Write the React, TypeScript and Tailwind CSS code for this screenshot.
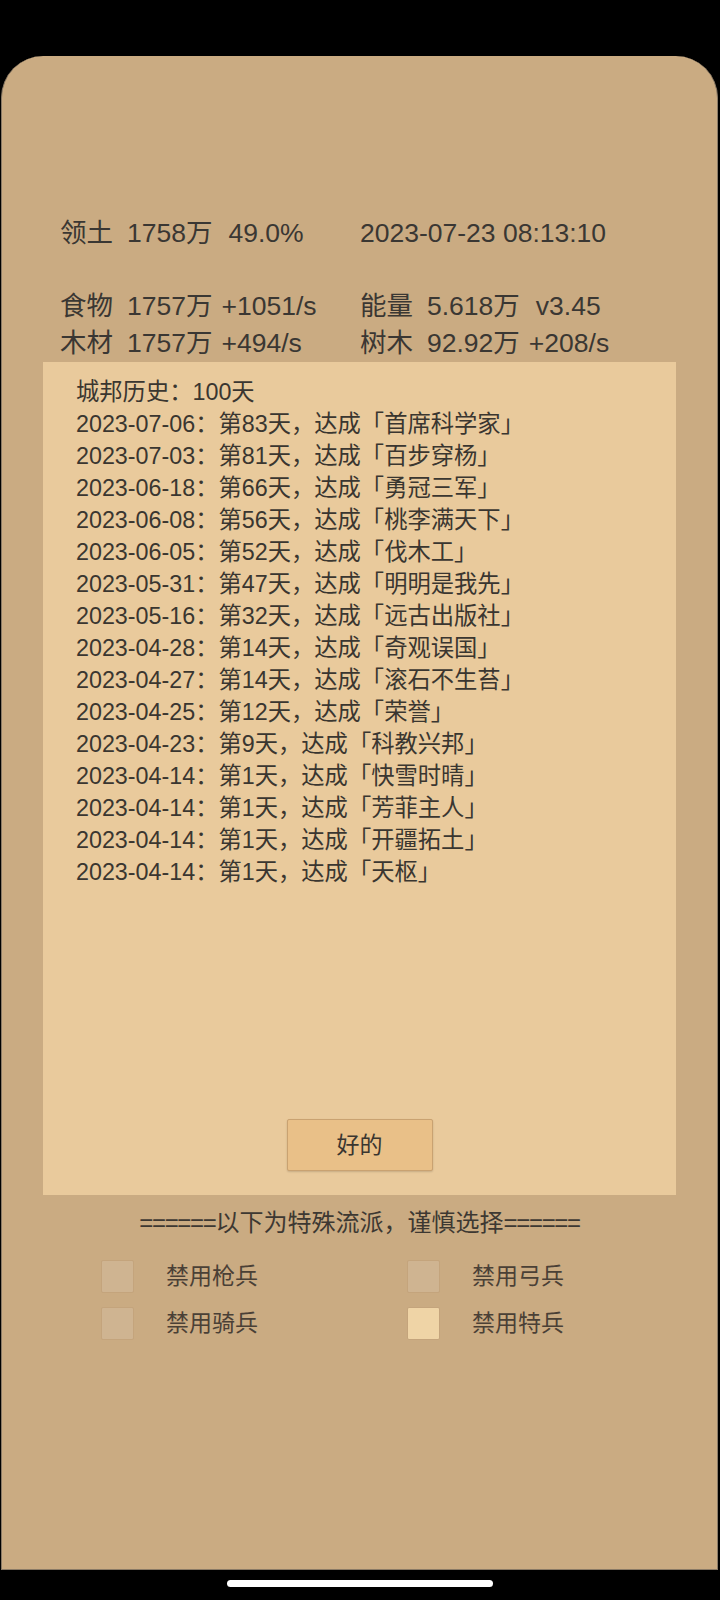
import React from "react";

const font = { fontFamily: "'Liberation Sans', 'Noto Sans CJK SC', sans-serif" };

const history = [
  "2023-07-06：第83天，达成「首席科学家」",
  "2023-07-03：第81天，达成「百步穿杨」",
  "2023-06-18：第66天，达成「勇冠三军」",
  "2023-06-08：第56天，达成「桃李满天下」",
  "2023-06-05：第52天，达成「伐木工」",
  "2023-05-31：第47天，达成「明明是我先」",
  "2023-05-16：第32天，达成「远古出版社」",
  "2023-04-28：第14天，达成「奇观误国」",
  "2023-04-27：第14天，达成「滚石不生苔」",
  "2023-04-25：第12天，达成「荣誉」",
  "2023-04-23：第9天，达成「科教兴邦」",
  "2023-04-14：第1天，达成「快雪时晴」",
  "2023-04-14：第1天，达成「芳菲主人」",
  "2023-04-14：第1天，达成「开疆拓土」",
  "2023-04-14：第1天，达成「天枢」",
];

const options = [
  { label: "禁用枪兵", checked: false },
  { label: "禁用弓兵", checked: false },
  { label: "禁用骑兵", checked: false },
  { label: "禁用特兵", checked: true },
];

const Stat = ({ name, value, extra }: { name: string; value: string; extra?: string }) => (
  <div className="flex whitespace-pre">
    <span>{name}</span>
    <span className="ml-[14px]">{value}</span>
    {extra && <span className={extra.startsWith("+") ? "ml-[9px]" : "ml-[16px]"}>{extra}</span>}
  </div>
);

export default function App() {
  return (
    <div className="w-[720px] h-[1600px] bg-black pt-[56px] overflow-hidden" style={font}>
      <div className="ml-[1px] w-[717px] h-[1514px] bg-[#caab82] rounded-t-[42px] border border-t-0 border-[#8a7a66] flex flex-col">
        {/* Stats */}
        <div className="pt-[159px] pl-[58px] text-[26.5px] leading-[36.5px] text-[#3a3733]">
          <div className="grid grid-cols-[300px_1fr]">
            <Stat name="领土" value="1758万" extra="49.0%" />
            <div className="whitespace-pre">2023-07-23 08:13:10</div>
            <div className="h-[36.5px]" />
            <div className="h-[36.5px]" />
            <Stat name="食物" value="1757万" extra="+1051/s" />
            <Stat name="能量" value="5.618万" extra="v3.45" />
            <Stat name="木材" value="1757万" extra="+494/s" />
            <Stat name="树木" value="92.92万" extra="+208/s" />
          </div>
        </div>

        {/* History panel */}
        <div className="mt-[1px] ml-[41px] w-[633px] h-[833px] bg-[#e9ca9c] flex flex-col pt-[14px] pb-[24px]">
          <div className="pl-[33px] text-[23.3px] leading-[32px] text-[#3a3630]">
            <div>城邦历史：100天</div>
            {history.map((line, i) => (
              <div key={i}>{line}</div>
            ))}
          </div>
          <div className="mt-auto flex justify-center">
            <button className="w-[146px] h-[52px] bg-[#e9c088] border border-[#c9a271] rounded-[2px] shadow-[0_1px_2px_rgba(0,0,0,0.15)] text-[23px] text-[#3a3630]">
              好的
            </button>
          </div>
        </div>

        {/* Special options */}
        <div className="mt-[12px] text-center text-[24px] leading-[32px] text-[#3d3832]">
          <span className="tracking-[-1.3px]">======</span>以下为特殊流派，谨慎选择<span className="tracking-[-1.3px]">======</span>
        </div>
        <div className="mt-[20px] pl-[99px] grid grid-cols-[306px_306px] gap-y-[13px]">
          {options.map((o) => (
            <label key={o.label} className="flex items-center h-[34px]">
              <span
                className={
                  o.checked
                    ? "w-[33px] h-[33px] rounded-[2px] border border-[#c4a47c] bg-[#efd4a6]"
                    : "w-[33px] h-[33px] rounded-[2px] border border-[#c4a47c] bg-[#cfb491]"
                }
              />
              <span className="ml-[32px] text-[23px] text-[#4a4036]">{o.label}</span>
            </label>
          ))}
        </div>
      </div>
      <div className="mt-[10px] mx-auto w-[266px] h-[7px] rounded-full bg-white" />
    </div>
  );
}
